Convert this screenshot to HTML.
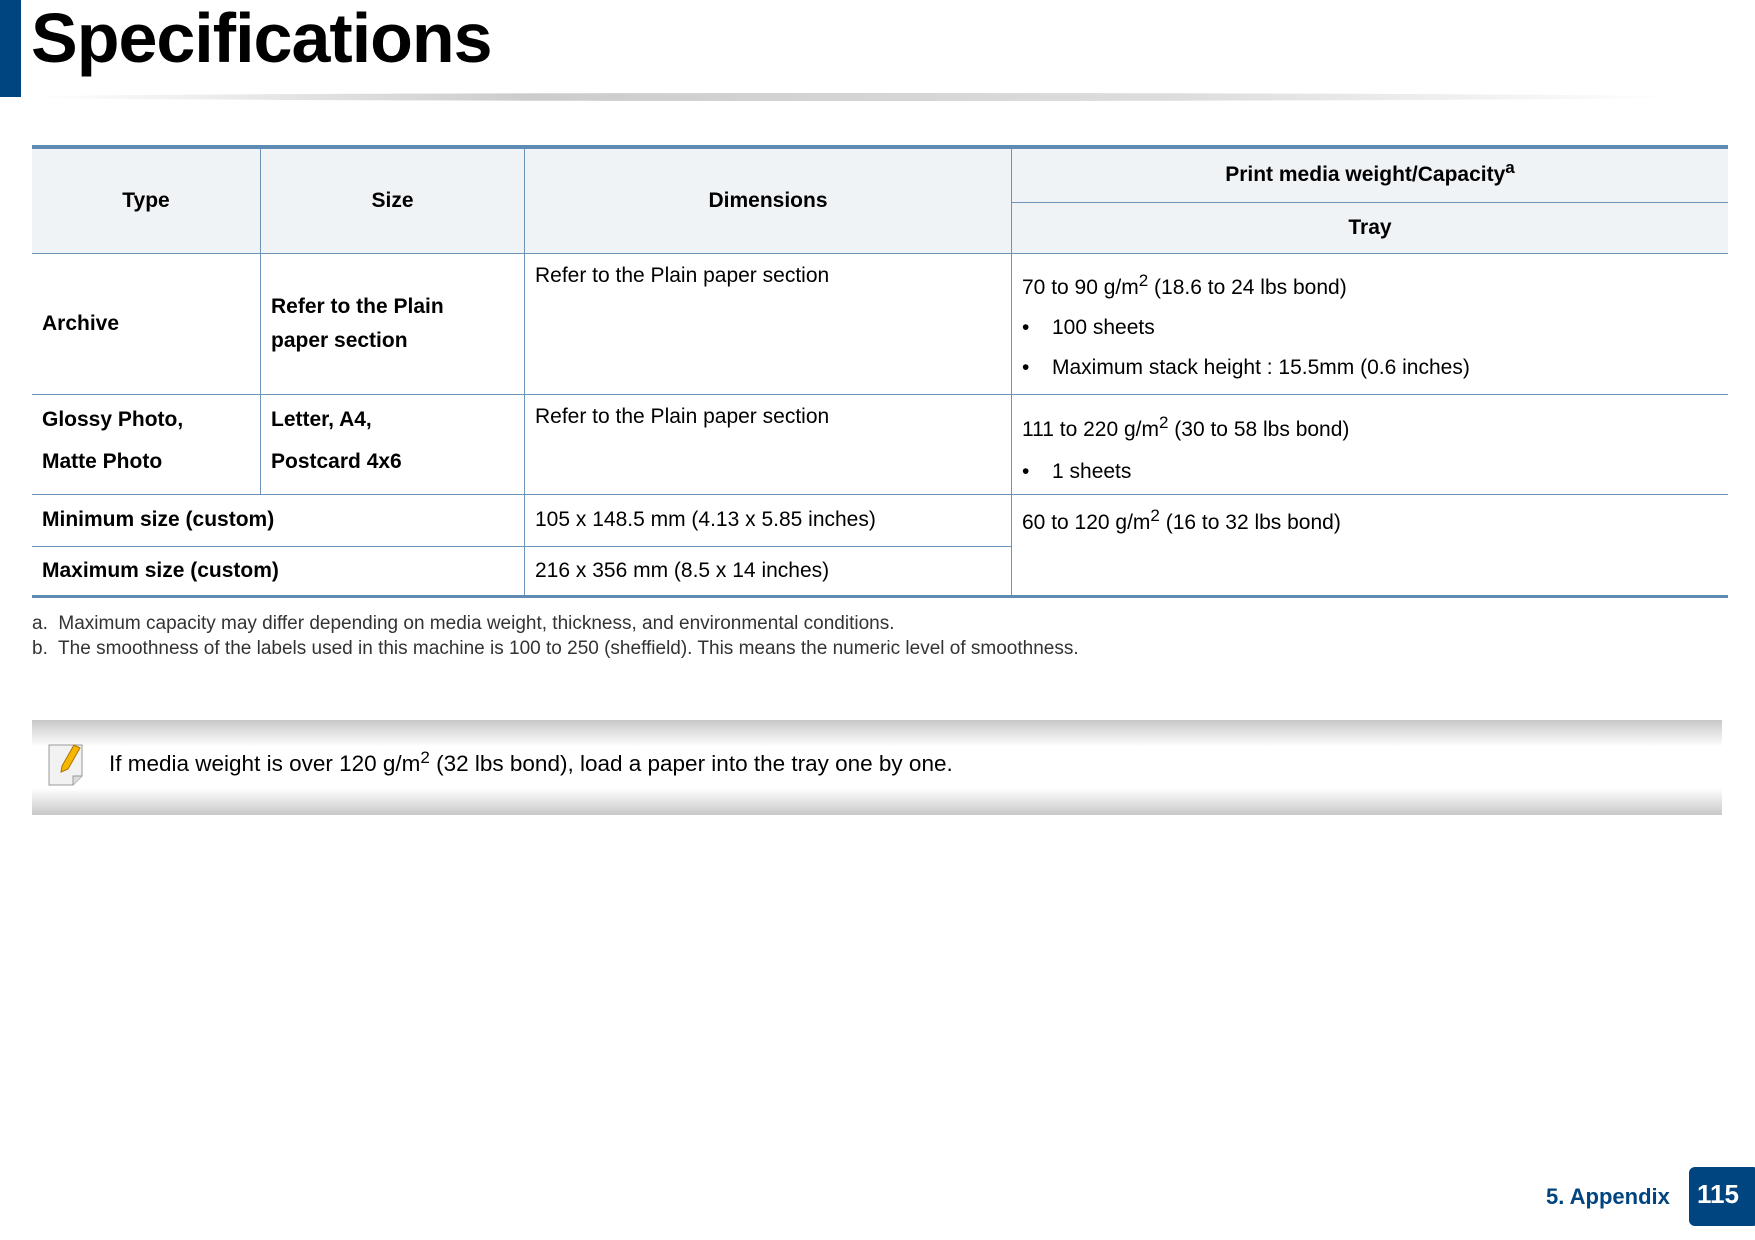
<!DOCTYPE html>
<html><head><meta charset="utf-8"><style>
body{margin:0;width:1755px;height:1240px;background:#fff;position:relative;font-family:"Liberation Sans",sans-serif;color:#000;overflow:hidden}
.abs{position:absolute}
table{position:absolute;left:32px;top:145px;width:1696px;border-collapse:collapse;font-size:21px}
td{border:1px solid #6e93b8;vertical-align:top;padding:0 10px}
table{border-top:4px solid #5e8ab4;border-bottom:3px solid #5e8ab4}
tr:first-child td{border-top:none}
td:first-child{border-left:none} td:last-child{border-right:none}
.h td{background:#eff3f6;font-weight:bold;text-align:center;vertical-align:middle}
b{font-weight:bold}
sup{font-size:17px;line-height:0;vertical-align:8px}
ul{margin:0;padding:0;list-style:none}
li{position:relative;padding-left:30px}
li:before{content:"•";position:absolute;left:0}
</style></head><body>
<div class="abs" style="left:0;top:0;width:21px;height:97px;background:#00457f"></div>
<div class="abs" style="left:31px;top:-2px;font-size:70px;font-weight:bold;letter-spacing:-1px">Specifications</div>
<div class="abs" style="left:30px;top:93px;width:1650px;height:8px;background:linear-gradient(90deg,#fff,#ccc 30%,#ddd 70%,#fff);border-radius:50%"></div>
<table>
<tr class="h" style="height:55px"><td rowspan="2" style="width:208px">Type</td><td rowspan="2" style="width:243px">Size</td><td rowspan="2" style="width:466px">Dimensions</td><td>Print media weight/Capacity<sup>a</sup></td></tr>
<tr class="h" style="height:51px"><td>Tray</td></tr>
<tr style="height:141px"><td style="vertical-align:middle"><b>Archive</b></td><td style="vertical-align:middle;line-height:34px"><b>Refer to the Plain<br>paper section</b></td><td style="padding-top:10px">Refer to the Plain paper section</td><td style="padding-top:14px;line-height:40px">70 to 90 g/m<sup>2</sup> (18.6 to 24 lbs bond)<ul><li>100 sheets</li><li>Maximum stack height : 15.5mm (0.6 inches)</li></ul></td></tr>
<tr style="height:100px"><td style="line-height:42px;padding-top:4px"><b>Glossy Photo,<br>Matte Photo</b></td><td style="line-height:42px;padding-top:4px"><b>Letter, A4,<br>Postcard 4x6</b></td><td style="padding-top:10px">Refer to the Plain paper section</td><td style="padding-top:14px;line-height:42px">111 to 220 g/m<sup>2</sup> (30 to 58 lbs bond)<ul><li>1 sheets</li></ul></td></tr>
<tr style="height:52px"><td colspan="2" style="vertical-align:middle"><b>Minimum size (custom)</b></td><td style="vertical-align:middle">105 x 148.5 mm (4.13 x 5.85 inches)</td><td rowspan="2" style="padding-top:16px">60 to 120 g/m<sup>2</sup> (16 to 32 lbs bond)</td></tr>
<tr style="height:50px"><td colspan="2" style="vertical-align:middle"><b>Maximum size (custom)</b></td><td style="vertical-align:middle">216 x 356 mm (8.5 x 14 inches)</td></tr>
</table>
<div class="abs" style="left:32px;top:611px;font-size:19px;color:#333;line-height:25px">a.&nbsp; Maximum capacity may differ depending on media weight, thickness, and environmental conditions.<br>b.&nbsp; The smoothness of the labels used in this machine is 100 to 250 (sheffield). This means the numeric level of smoothness.</div>
<div class="abs" style="left:32px;top:720px;width:1690px;height:95px;background:linear-gradient(180deg,#c8c8c8,#fff 28%,#fff 72%,#c8c8c8)"></div>
<svg class="abs" style="left:45px;top:740px" width="45" height="48" viewBox="0 0 45 48"><path d="M4 5h33v31l-9 9H4z" fill="#f2f2f2" stroke="#999"/><path d="M28 45v-9h9" fill="#ddd" stroke="#999"/><path d="M17 26l12-21 6 3-12 21-7 3z" fill="#f5b800" stroke="#b07000"/></svg>
<div class="abs" style="left:109px;top:751px;font-size:22.5px">If media weight is over 120 g/m<sup>2</sup> (32 lbs bond), load a paper into the tray one by one.</div>
<div class="abs" style="left:1546px;top:1184px;font-size:22px;font-weight:bold;color:#00457f">5. Appendix</div>
<div class="abs" style="left:1689px;top:1167px;width:70px;height:59px;background:#00457f;border-radius:6px;color:#fff;font-weight:bold;font-size:26px;line-height:55px;text-indent:8px">115</div>
</body></html>
